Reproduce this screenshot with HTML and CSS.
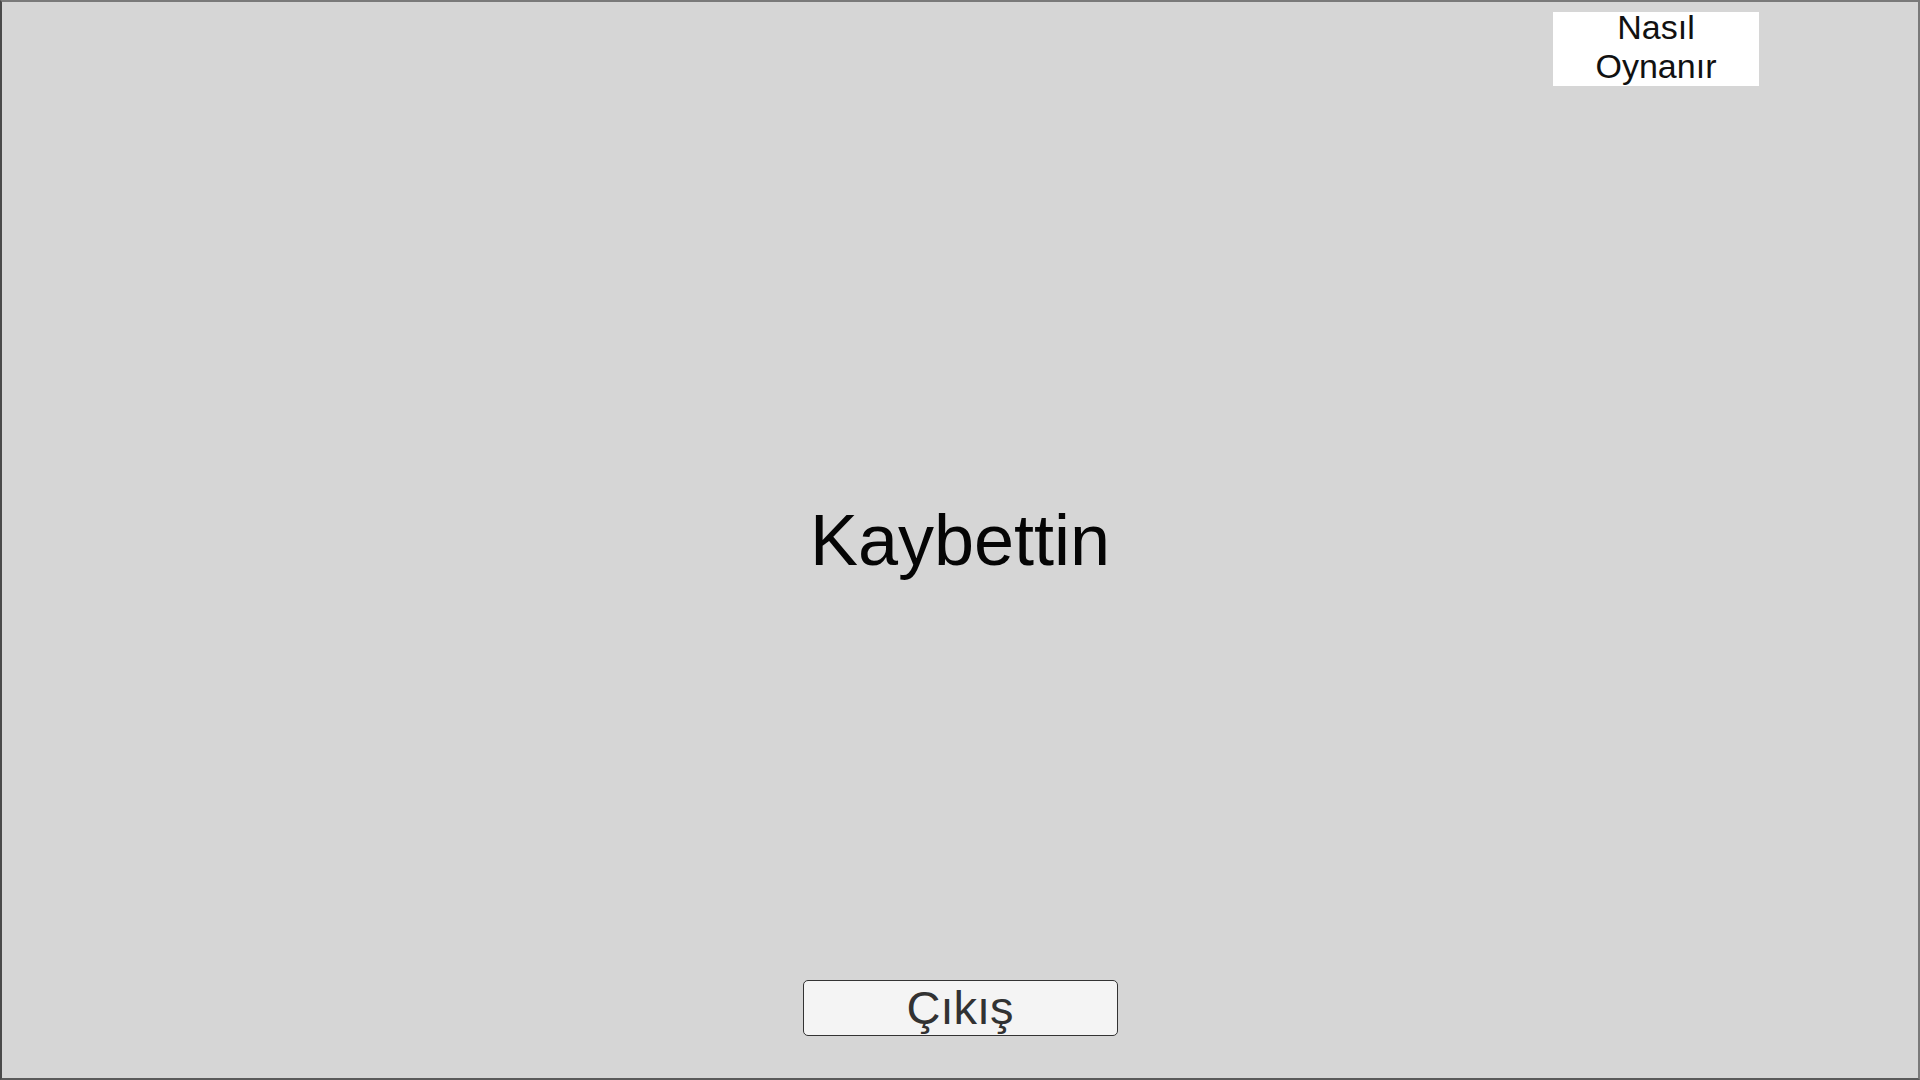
FILE: index.html
```html
<!DOCTYPE html>
<html lang="tr">
<head>
<meta charset="utf-8">
<title>Kaybettin</title>
<link rel="stylesheet" href="styles.css">
</head>
<body>
<div class="screen">
  <div class="top">
    <button class="help"><span class="help-text">Nasıl<br>Oynanır</span></button>
  </div>
  <h1 class="title">Kaybettin</h1>
  <button class="exit">Çıkış</button>
</div>
</body>
</html>
```
FILE: styles.css
```css
html, body {
  margin: 0;
  padding: 0;
}
body {
  font-family: "Liberation Sans", Arial, sans-serif;
  background: #d6d6d6;
}
.screen {
  width: 1920px;
  height: 1080px;
  box-sizing: border-box;
  border: 2px solid #7a7a7a;
  border-left-color: #4a4a4a;
  border-bottom-color: #5a5a5a;
  background: #d6d6d6;
  display: flex;
  flex-direction: column;
  overflow: hidden;
}
.top {
  display: flex;
  justify-content: flex-end;
  padding: 10px 159px 0 0;
}
.help {
  width: 206px;
  height: 74px;
  background: #ffffff;
  border: none;
  padding: 0;
  margin: 0;
  font-family: "Liberation Sans", Arial, sans-serif;
  font-size: 34px;
  line-height: 39px;
  color: #111111;
  text-align: center;
  display: block;
  overflow: visible;
}
.help-text {
  display: block;
  margin-top: -5px;
}
.title {
  margin: 413px 0 0 0;
  font-size: 72px;
  line-height: 82px;
  font-weight: normal;
  color: #050505;
  text-align: center;
}
.exit {
  margin: 399px auto 0 auto;
  width: 315px;
  height: 56px;
  box-sizing: border-box;
  border: 1px solid #333333;
  border-radius: 5px;
  background: #f4f4f4;
  font-family: "Liberation Sans", Arial, sans-serif;
  font-size: 47px;
  line-height: 54px;
  color: #323232;
  padding: 0;
  text-align: center;
  display: block;
}
```
